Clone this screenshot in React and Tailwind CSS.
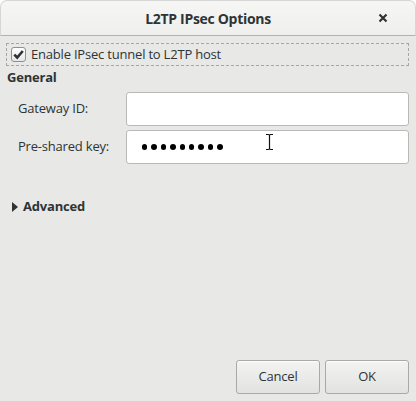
import React, { useState } from 'react';

// Dialog: L2TP IPsec Options
function Checkbox({ checked }) {
  return (
    <span className="w-[15px] h-[15px] rounded-[3px] border border-[#8d9091] bg-gradient-to-b from-white to-[#e6e6e6] flex items-center justify-center shrink-0">
      {checked && (
        <svg width="11" height="11" viewBox="0 0 11 11">
          <path d="M1.3 5.6 L4.2 8.5 L9.8 2" fill="none" stroke="#2e3436" strokeWidth="2.6" />
        </svg>
      )}
    </span>
  );
}

function Field({ label, children }) {
  return (
    <div className="flex items-center h-[34px]">
      <div className="w-[120px] pl-[12px] text-[13px]">{label}</div>
      <div className="flex-1 h-full bg-white border border-[#b9bab7] rounded-[3px] flex items-center relative">
        {children}
      </div>
    </div>
  );
}

function App() {
  const [enabled] = useState(true);

  return (
    <div
      className="w-[416px] h-[401px] bg-[#e8e8e7] text-[#2e3436] flex flex-col rounded-t-[7px] overflow-hidden tracking-[-0.2px]"
      style={{ fontFamily: '"Open Sans", "Noto Sans", sans-serif' }}
    >
      {/* Title bar */}
      <header className="h-[36px] shrink-0 bg-gradient-to-b from-[#f6f6f5] to-[#efefee] border-b border-[#b2b3b0] flex items-center relative rounded-t-[7px] border-t border-x border-t-[#d6d6d4] border-x-[#d6d6d4]">
        <h1 className="w-full text-center text-[14px] font-bold tracking-[-0.3px]">L2TP IPsec Options</h1>
        <span className="absolute right-[27px] top-[12px]">
          <svg width="10" height="10" viewBox="0 0 10 10">
            <path d="M1.5 1.5 L8.5 8.5 M8.5 1.5 L1.5 8.5" stroke="#2e3436" strokeWidth="2.2" />
          </svg>
        </span>
      </header>

      {/* Content */}
      <main className="flex-1 flex flex-col px-[6px] pt-[7px]">
        <label className="h-[23px] border border-dashed border-[#a6a7a5] flex items-center gap-[5px] pl-[4px] mr-[1px] text-[13px]">
          <Checkbox checked={enabled} />
          <span>Enable IPsec tunnel to L2TP host</span>
        </label>

        <div className="mt-[2px] pl-[1px] text-[13px] font-bold leading-[18px]">General</div>

        <div className="flex flex-col gap-[4px] mt-[6px] mr-[1px]">
          <Field label="Gateway ID:" />
          <Field label="Pre-shared key:">
            <div className="flex gap-[4px] pl-[15px]">
              {Array.from({ length: 9 }).map((_, i) => (
                <span key={i} className="w-[5.4px] h-[5.4px] rounded-full bg-black" />
              ))}
            </div>
            <svg className="absolute left-[138px] top-[2px]" width="9" height="18" viewBox="0 0 9 18">
              <path d="M1 1.5 H3.5 Q4.5 1.5 4.5 3 V15 Q4.5 16.5 3.5 16.5 H1 M8 1.5 H5.5 Q4.5 1.5 4.5 3 M4.5 15 Q4.5 16.5 5.5 16.5 H8" fill="none" stroke="#111" strokeWidth="1.2" />
            </svg>
          </Field>
        </div>

        <div className="flex items-center mt-[33px] pl-[6px] gap-[5px] text-[13px] font-bold">
          <svg width="6" height="10" viewBox="0 0 6 10">
            <path d="M0 0 L6 5 L0 10 Z" fill="#2e3436" />
          </svg>
          <span>Advanced</span>
        </div>

        <div className="flex-1" />

        {/* Buttons */}
        <footer className="flex justify-end gap-[5px] pb-[7px] pr-[1px]">
          {['Cancel', 'OK'].map((t) => (
            <button
              key={t}
              className="w-[84px] h-[34px] rounded-[3px] border border-[#a9aaa7] bg-gradient-to-b from-[#f3f3f2] to-[#e2e2e0] text-[13px] text-[#2e3436] shadow-[inset_0_1px_0_#fff]"
            >
              {t}
            </button>
          ))}
        </footer>
      </main>
    </div>
  );
}

export default App;
